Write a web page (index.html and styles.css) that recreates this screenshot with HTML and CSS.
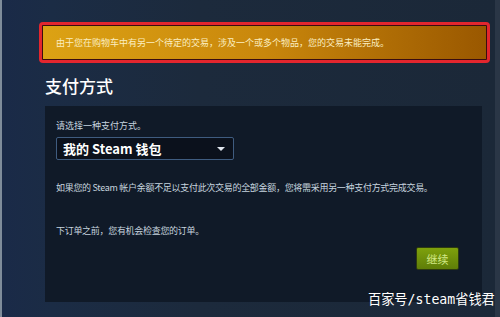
FILE: index.html
```html
<!DOCTYPE html>
<html lang="zh-CN">
<head>
<meta charset="UTF-8" />
<meta name="viewport" content="width=device-width, initial-scale=1" />
<title>支付方式</title>
<link rel="stylesheet" href="styles.css">
</head>
<body>

<div class="page">
  <div class="notice">
    <div class="notice-inner">由于您在购物车中有另一个待定的交易，涉及一个或多个物品，您的交易未能完成。</div>
  </div>

  <h1>支付方式</h1>

  <div class="panel">
    <div class="label">请选择一种支付方式。</div>
    <div class="select">
      <span>我的 Steam 钱包</span>
      <span class="arrow"></span>
    </div>
    <p class="info">如果您的 Steam 帐户余额不足以支付此次交易的全部金额，您将需采用另一种支付方式完成交易。</p>
    <p class="info">下订单之前，您有机会检查您的订单。</p>
    <div class="actions">
      <button class="continue">继续</button>
    </div>
  </div>

  <div class="watermark">百家号/steam省钱君</div>
</div>

</body>
</html>
```

FILE: styles.css
```css
body {
  margin: 0;
  padding: 0;
  font-family: "Noto Sans CJK SC", "Noto Sans", sans-serif;
  background: #1b2838;
  overflow: hidden;
}
.page {
  position: relative;
  width: 500px;
  height: 317px;
  box-sizing: border-box;
  padding: 22px 10px 0 40px;
  background: linear-gradient(90deg, #1a2a48 0%, #1b2c45 10%, #1c2a3c 40%, #1b2838 100%);
  border-left: 2px solid #7f8c9a;
  border-right: 5px solid #2a3646;
}
.notice {
  width: 451px;
  height: 41px;
  box-sizing: border-box;
  margin-left: -3px;
  border: 3px solid #e3262e;
  border-radius: 4px;
  background: #3a0d10;
  padding: 1px;
}
.notice-inner {
  height: 100%;
  box-sizing: border-box;
  padding-left: 13px;
  display: flex;
  align-items: center;
  background: linear-gradient(90deg, #dca214 0%, #c9870c 50%, #9a5800 100%);
  color: #fbeec0;
  font-size: 9px;
  white-space: nowrap;
}
h1 {
  margin: 11px 0 0 3px;
  font-size: 17px;
  font-weight: 500;
  line-height: 24px;
  color: #ffffff;
}
.panel {
  width: 437px;
  height: 196px;
  box-sizing: border-box;
  margin: 8px 0 0 3px;
  padding: 13px 12px 0 11px;
  background: #101a28;
}
.label {
  font-size: 9px;
  color: #c6d4df;
  line-height: 14px;
}
.select {
  width: 178px;
  height: 23px;
  box-sizing: border-box;
  margin-top: 4px;
  padding: 0 8px 0 6px;
  display: flex;
  align-items: center;
  justify-content: space-between;
  background: #0b111c;
  border: 1px solid #3f5c80;
  border-radius: 2px;
  color: #ffffff;
  font-size: 13px;
  font-weight: 600;
}
.arrow {
  width: 0;
  height: 0;
  border-left: 4px solid transparent;
  border-right: 4px solid transparent;
  border-top: 4px solid #e0e6ee;
}
.info {
  margin: 21px 0 0;
  font-size: 9px;
  line-height: 14px;
  letter-spacing: -0.3px;
  color: #c6d4df;
  white-space: nowrap;
}
.info + .info {
  margin-top: 29px;
}
.actions {
  display: flex;
  justify-content: flex-end;
  margin-top: 9px;
  padding-right: 11px;
}
.continue {
  width: 43px;
  height: 23px;
  border: 1px solid #2d3a10;
  border-radius: 2px;
  background: linear-gradient(180deg, #7ea10c 0%, #5f7d08 100%);
  color: #d2e885;
  font-family: "Noto Sans CJK SC", sans-serif;
  font-size: 11px;
  padding: 0;
}
.watermark {
  position: absolute;
  left: 366px;
  top: 291px;
  font-family: "DejaVu Sans Mono", "Noto Sans CJK SC", monospace;
  font-size: 13.2px;
  line-height: 18px;
  color: #ffffff;
  white-space: nowrap;
}
```
